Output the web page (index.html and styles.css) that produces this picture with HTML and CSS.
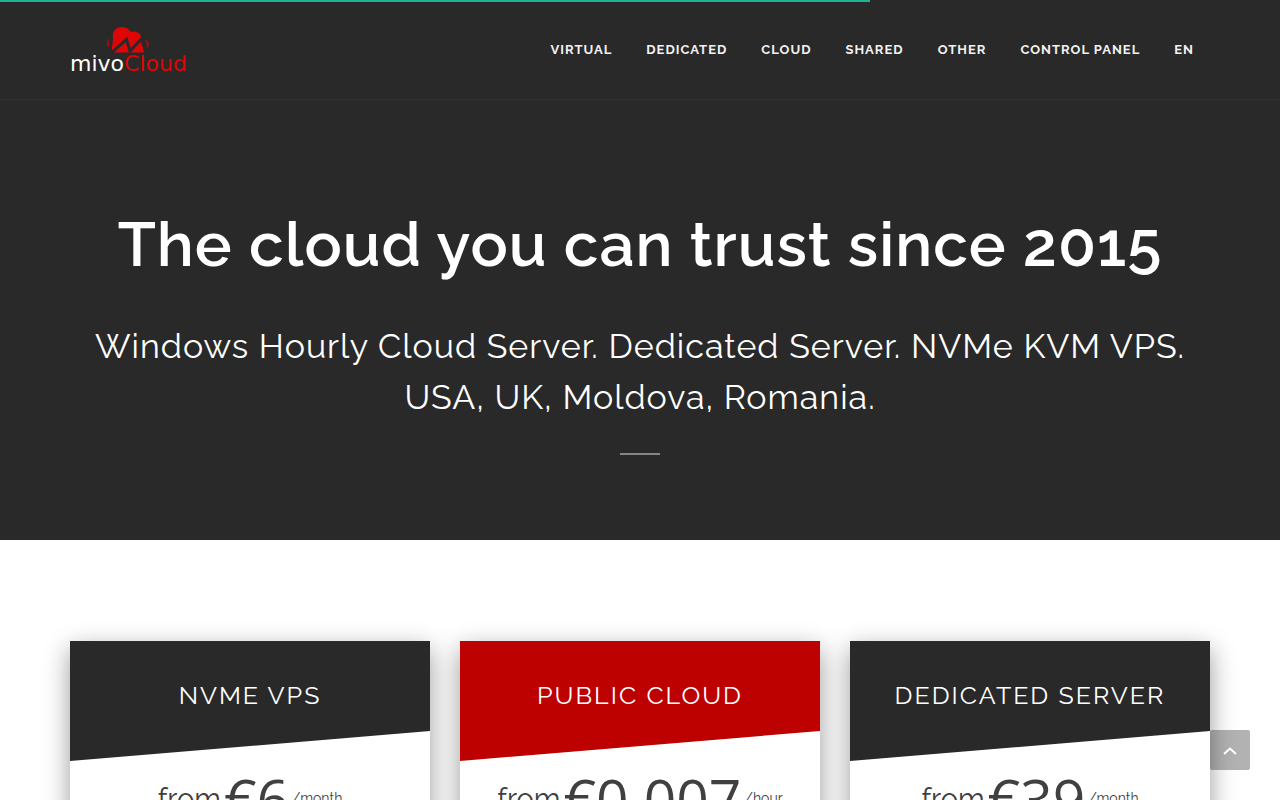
FILE: index.html
```html
<!DOCTYPE html>
<html lang="en">
<head>
<meta charset="utf-8">
<meta name="viewport" content="width=device-width, initial-scale=1">
<title>MivoCloud</title>
<link rel="stylesheet" href="styles.css">
</head>
<body>
<div class="progress"></div>
<header class="header">
  <div class="container header-row">
    <a class="logo" href="#">
      <svg class="logo-mark" viewBox="0 0 44 27" aria-hidden="true">
        <path d="M6 26.500V20Q7 17 7 12C6 5 10 1 16 1C20 1 23 3 25 6C31 4 36 8 36 14L38 26.500z" fill="#dd0505"/>
        <path d="M3 29 20.500 13.500 24 25 35.500 13 41 29" fill="none" stroke="#292929" stroke-width="3"/>
        <path d="M3 13Q0 17 2 21L3 20Q2 17 3 13zM39 14Q42 18 41 22Q43 20 42.500 17Q42 15 39 14z" fill="#b80808" stroke="#b80808" stroke-width=".5"/>
      </svg>
      <span class="logo-text"><span>mivo</span><span class="logo-red">Cloud</span></span>
    </a>
    <nav class="nav">
      <a href="#">VIRTUAL</a>
      <a href="#">DEDICATED</a>
      <a href="#">CLOUD</a>
      <a href="#">SHARED</a>
      <a href="#">OTHER</a>
      <a href="#">CONTROL PANEL</a>
      <a href="#">EN</a>
    </nav>
  </div>
</header>
<main>
  <section class="hero">
    <div class="container">
      <h1>The cloud you can trust since 2015</h1>
      <p>Windows Hourly Cloud Server. Dedicated Server. NVMe KVM VPS.<br>USA, UK, Moldova, Romania.</p>
      <hr class="rule">
    </div>
  </section>
  <section class="plans">
    <div class="container plan-grid">
      <article class="card">
        <h2>NVME VPS</h2>
        <p class="price"><span class="from">from</span><span class="amount">€6</span><span class="unit">/month</span></p>
      </article>
      <article class="card card-red">
        <h2>PUBLIC CLOUD</h2>
        <p class="price"><span class="from">from</span><span class="amount">€0.007</span><span class="unit">/hour</span></p>
      </article>
      <article class="card">
        <h2>DEDICATED SERVER</h2>
        <p class="price"><span class="from">from</span><span class="amount">€39</span><span class="unit">/month</span></p>
      </article>
    </div>
  </section>
</main>
<button class="to-top" type="button" aria-label="Back to top">
  <svg viewBox="0 0 14 8" aria-hidden="true"><path d="M1 7 7 1.500 13 7" fill="none" stroke="#fff" stroke-width="2"/></svg>
</button>
</body>
</html>
```
FILE: styles.css
```css
* { box-sizing: border-box; }
body {
  margin: 0;
  background: #fff;
  color: #404040;
  font-family: Raleway, Lato, sans-serif;
}
.container {
  max-width: 1170px;
  margin: 0 auto;
  padding: 0 15px;
}
.progress {
  position: fixed;
  top: 0;
  left: 0;
  z-index: 2;
  width: 68%;
  height: 2px;
  background: #1eb493;
}
.header {
  background: #292929;
  border-bottom: 1px solid #323232;
}
.header-row {
  display: flex;
  align-items: center;
  justify-content: space-between;
  height: 99px;
}
.logo {
  display: flex;
  flex-direction: column;
  align-items: center;
  padding-top: 2px;
  color: #fff;
  text-decoration: none;
}
.logo-mark { width: 44px; height: 27px; }
.logo-text {
  font: 400 22px/22px "DejaVu Sans", sans-serif;
}
.logo-red { color: #dd0505; }
.nav {
  display: flex;
  gap: 34px;
  padding-right: 16px;
}
.nav a {
  color: #f2f2f2;
  font-size: 13px;
  font-weight: 700;
  line-height: 20px;
  letter-spacing: 1px;
  text-decoration: none;
}
.hero {
  padding: 105px 0 85px;
  background: #292929;
  color: #fff;
  text-align: center;
}
.hero h1 {
  margin: 0;
  font-size: 62px;
  font-weight: 600;
  line-height: 80px;
  letter-spacing: 1px;
}
.hero p {
  margin: 36px 0 30px;
  font-size: 34px;
  font-weight: 400;
  line-height: 51px;
  letter-spacing: 1px;
}
.rule {
  width: 40px;
  height: 2px;
  margin: 0 auto;
  border: 0;
  background: #858585;
}
.plans { padding: 101px 0 100px; }
.plan-grid {
  display: grid;
  grid-template-columns: repeat(3, 1fr);
  gap: 30px;
}
.card {
  background: #fff;
  box-shadow: 0 8px 24px rgba(0, 0, 0, .4);
  text-align: center;
}
.card h2 {
  margin: 0;
  padding: 39px 0 51px;
  background: #292929;
  clip-path: polygon(0 0, 100% 0, 100% 75%, 0 100%);
  color: #fff;
  font-size: 25px;
  font-weight: 400;
  line-height: 30px;
  letter-spacing: 2px;
}
.card-red h2 { background: #bd0000; }
.price {
  display: flex;
  align-items: center;
  justify-content: center;
  gap: 3px;
  margin: 0;
  padding-bottom: 60px;
  line-height: 76px;
}
.from { font-size: 29px; }
.amount { font-family: "Open Sans", sans-serif; font-size: 57px; }
.unit { font-size: 14px; line-height: 74px; padding-bottom: 2px; }
.to-top {
  position: fixed;
  right: 30px;
  bottom: 30px;
  width: 40px;
  height: 40px;
  padding: 0;
  border: 0;
  border-radius: 2px;
  background: rgba(0, 0, 0, .3);
}
.to-top svg { width: 14px; height: 8px; }
```
